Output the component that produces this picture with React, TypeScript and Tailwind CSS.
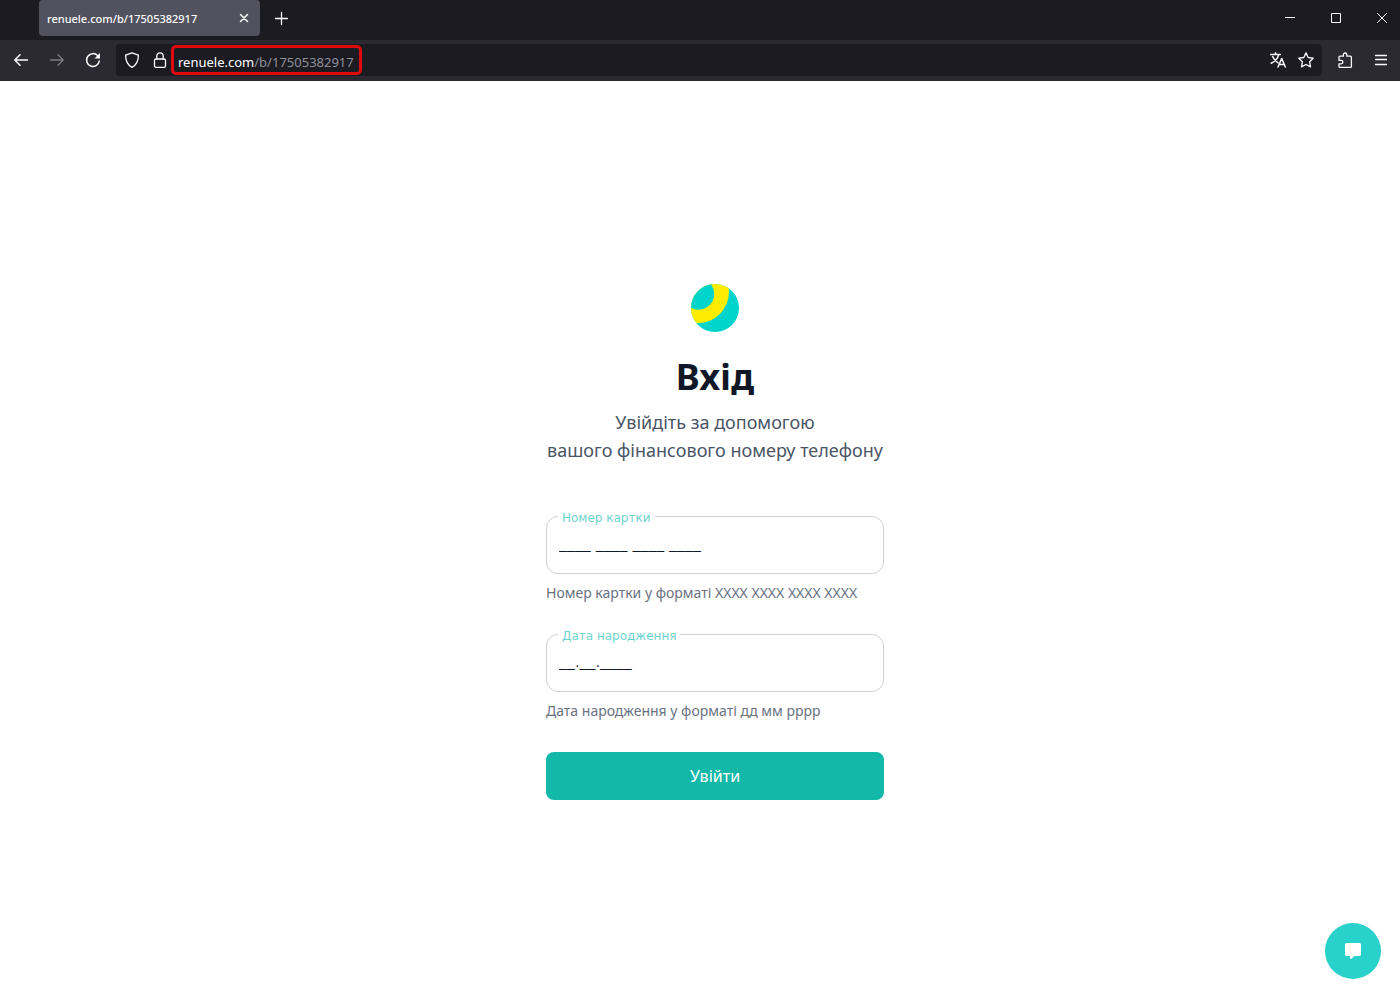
import { ReactNode, useState } from 'react';

function Icon({ children, size = 16 }: { children: ReactNode; size?: number }) {
  return (
    <svg
      width={size}
      height={size}
      viewBox="0 0 16 16"
      fill="none"
      stroke="currentColor"
      strokeWidth="1.3"
      strokeLinecap="round"
      strokeLinejoin="round"
      aria-hidden="true"
    >
      {children}
    </svg>
  );
}

function TabStrip() {
  return (
    <div className="flex h-10 items-start justify-between bg-[#1c1b22] pl-[39px] text-[#fbfbfe]">
      <div className="flex">
        <div className="flex h-9 w-[221px] items-center justify-between rounded bg-[#52525e] px-2">
          <span className="pt-0.5 text-[11px] font-medium">
            renuele.com/b/17505382917
          </span>
          <button type="button" aria-label="Close tab">
            <Icon>
              <path d="M4.5 4.5l7 7M11.5 4.5l-7 7" strokeWidth="1.5" />
            </Icon>
          </button>
        </div>
        <button
          type="button"
          aria-label="New tab"
          className="flex h-9 w-[42px] items-center justify-center"
        >
          <Icon>
            <path d="M8.5 2.5v12M2.5 8.5h12" />
          </Icon>
        </button>
      </div>
      <div className="flex h-9 gap-[10px]">
        <button
          type="button"
          aria-label="Minimize"
          className="flex w-9 items-center justify-center"
        >
          <svg width="10" height="10" fill="none" stroke="currentColor">
            <path d="M0 4.5h10" />
          </svg>
        </button>
        <button
          type="button"
          aria-label="Maximize"
          className="flex w-9 items-center justify-center"
        >
          <svg width="10" height="10" fill="none" stroke="currentColor">
            <path d="M.5.5h9v9h-9z" />
          </svg>
        </button>
        <button
          type="button"
          aria-label="Close window"
          className="flex w-9 items-center justify-center"
        >
          <svg width="10" height="10" fill="none" stroke="currentColor">
            <path d="M0 0l10 10M10 0L0 10" />
          </svg>
        </button>
      </div>
    </div>
  );
}

function Toolbar() {
  const [path, setPath] = useState('/b/17505382917');

  return (
    <div className="flex h-[41px] items-center bg-[#2b2a33] pb-px pl-[13px] pr-[11px] text-[#fbfbfe]">
      <div className="flex items-center gap-5">
        <button type="button" aria-label="Back">
          <Icon>
            <path d="M14.5 8H2M7 2.8L1.8 8 7 13.2" strokeWidth="1.5" />
          </Icon>
        </button>
        <button type="button" aria-label="Forward" className="text-[#7d7c84]">
          <Icon>
            <path d="M1.5 8H14M9 2.8L14.2 8 9 13.2" />
          </Icon>
        </button>
        <button type="button" aria-label="Reload">
          <Icon>
            <path
              d="M14.3 9A6.4 6.4 0 1 1 12.6 3.6L13.6 4.6"
              strokeWidth="1.5"
            />
            <path d="M15 1v5.5H9.5z" fill="currentColor" stroke="none" />
          </Icon>
        </button>
      </div>
      <div className="ml-[15px] flex h-8 flex-1 items-center rounded bg-[#1c1b22] px-2">
        <div className="flex items-center gap-3">
          <Icon>
            <path d="M8 .8L14.4 3.2C14.4 8.6 12.4 13 8 15.3 3.6 13 1.6 8.6 1.6 3.2z" />
          </Icon>
          <Icon>
            <rect x="2.5" y="7" width="11" height="8.3" rx="1.4" />
            <path d="M4.8 7V4a3.2 3.2 0 0 1 6.4 0v3" />
          </Icon>
        </div>
        <label className="ml-[3px] flex h-[30px] w-[191px] items-center rounded-[5px] border-3 border-[#e00b0b] pl-1 pt-1 text-[13px] leading-5">
          <span>renuele.com</span>
          <input
            value={path}
            onChange={(e) => setPath(e.target.value)}
            aria-label="Address"
            className="min-w-0 flex-1 bg-transparent text-[#8f8f9a] outline-none"
          />
        </label>
        <div className="ml-auto flex items-center gap-3">
          <button type="button" aria-label="Translate page">
            <Icon>
              <path
                d="M.7 2.6h9.6M5.5.8v1.8M8.6 2.8C7.8 6.2 5 9.4 1.2 11.2M2.6 4.6c1 2.6 3 4.8 5.4 6.2M8 15l3.7-8.5L15.3 15M9.3 12.4h4.8"
                strokeWidth="1.5"
              />
            </Icon>
          </button>
          <button type="button" aria-label="Bookmark page">
            <Icon>
              <path d="M8 .9l2.2 4.6 5 .7-3.6 3.5.9 5.2L8 12.5l-4.5 2.4.9-5.2L.8 6.2l5-.7z" />
            </Icon>
          </button>
        </div>
      </div>
      <div className="ml-[15px] flex items-center gap-5">
        <button type="button" aria-label="Extensions">
          <Icon>
            <path d="M2 5.2a1 1 0 0 1 1-1h3.4V2.7a1.7 1.7 0 0 1 3.4 0v1.5h3.6a1 1 0 0 1 1 1v9.2a1 1 0 0 1-1 1H3a1 1 0 0 1-1-1v-2.6h2.2a1.7 1.7 0 0 0 0-3.4H2z" />
          </Icon>
        </button>
        <button type="button" aria-label="Open menu">
          <Icon>
            <path d="M2.5 3.5h11M2.5 7.5h11M2.5 12.5h11" />
          </Icon>
        </button>
      </div>
    </div>
  );
}

function Logo() {
  return (
    <svg width="48" height="48" viewBox="0 0 48 48" aria-hidden="true">
      <clipPath id="logo-disc">
        <circle cx="24" cy="24" r="24" />
      </clipPath>
      <g clipPath="url(#logo-disc)">
        <rect width="48" height="48" fill="#00d4cb" />
        <circle cx="7" cy="8" r="31" fill="#ffed00" />
        <circle cx="7.5" cy="10" r="15.7" fill="#00d4cb" />
      </g>
    </svg>
  );
}

interface FieldProps {
  id: string;
  label: string;
  mask: string;
  hint: string;
}

function Field({ id, label, mask, hint }: FieldProps) {
  const [value, setValue] = useState(mask);

  return (
    <div>
      <div className="relative">
        <input
          id={id}
          value={value}
          onChange={(e) => setValue(e.target.value)}
          aria-describedby={`${id}-hint`}
          className="h-[58px] w-full rounded-xl border border-[#d1d1db] px-3 pb-1.5 text-[19px] font-light text-gray-900 outline-none focus:border-teal-500"
        />
        <label
          htmlFor={id}
          className="absolute -top-1.5 left-3 bg-white px-1 font-['DejaVu_Sans',sans-serif] text-[12px] leading-4 text-[#6fd3cd]"
        >
          {label}
        </label>
      </div>
      <p id={`${id}-hint`} className="mt-2 text-sm leading-[22px] text-gray-500">
        {hint}
      </p>
    </div>
  );
}

function LoginForm() {
  return (
    <form
      className="flex w-[338px] flex-col"
      onSubmit={(e) => e.preventDefault()}
    >
      <div className="flex flex-col items-center text-center">
        <Logo />
        <h1 className="mt-6 text-4xl font-bold leading-[42px] text-gray-900">
          Вхід
        </h1>
        <p className="mt-2.5 whitespace-nowrap text-lg leading-7 text-gray-600">
          Увійдіть за допомогою
          <br />
          вашого фінансового номеру телефону
        </p>
      </div>
      <div className="mt-[52px] flex flex-col gap-[30px]">
        <Field
          id="card"
          label="Номер картки"
          mask="____ ____ ____ ____"
          hint="Номер картки у форматі XXXX XXXX XXXX XXXX"
        />
        <Field
          id="birthday"
          label="Дата народження"
          mask="__.__.____"
          hint="Дата народження у форматі дд мм рррр"
        />
        <button
          type="submit"
          className="h-12 rounded-lg bg-[#14b8a8] text-base text-white"
        >
          Увійти
        </button>
      </div>
    </form>
  );
}

export default function App() {
  return (
    <div className="flex min-h-screen flex-col bg-white font-['Noto_Sans',sans-serif]">
      <header>
        <TabStrip />
        <Toolbar />
      </header>
      <main className="flex flex-1 items-center justify-center pl-[30px] pt-[3px]">
        <LoginForm />
      </main>
      <button
        type="button"
        aria-label="Чат"
        className="fixed bottom-[21px] right-[19px] flex size-14 items-center justify-center rounded-full bg-[#28d1ca] text-white"
      >
        <svg width="16" height="16" fill="currentColor" aria-hidden="true">
          <path d="M1.5 0h13A1.5 1.5 0 0 1 16 1.5v10a1.5 1.5 0 0 1-1.5 1.5H9.5L6 16H5v-3H1.5A1.5 1.5 0 0 1 0 11.5v-10A1.5 1.5 0 0 1 1.5 0z" />
        </svg>
      </button>
    </div>
  );
}
